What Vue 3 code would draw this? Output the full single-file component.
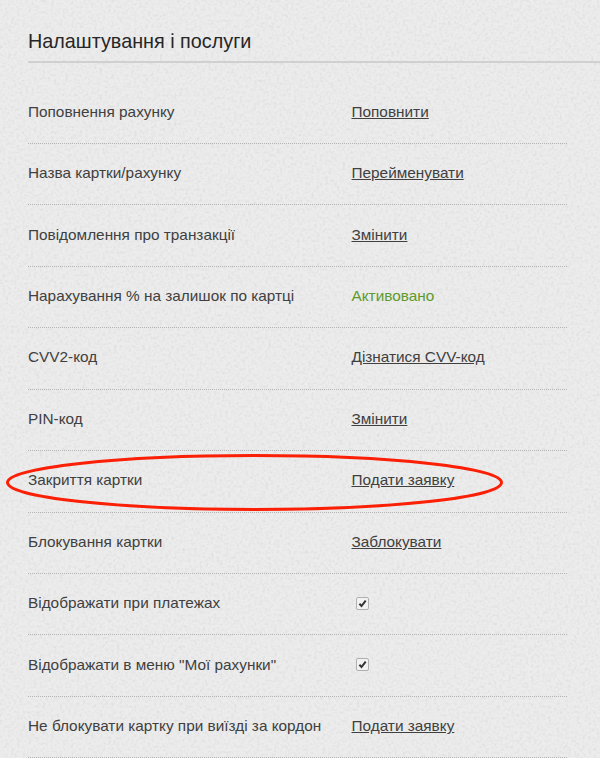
<script setup>
const rows = [
  { label: 'Поповнення рахунку', link: 'Поповнити' },
  { label: 'Назва картки/рахунку', link: 'Перейменувати' },
  { label: 'Повідомлення про транзакції', link: 'Змінити' },
  { label: 'Нарахування % на залишок по картці', status: 'Активовано' },
  { label: 'CVV2-код', link: 'Дізнатися CVV-код' },
  { label: 'PIN-код', link: 'Змінити' },
  { label: 'Закриття картки', link: 'Подати заявку' },
  { label: 'Блокування картки', link: 'Заблокувати' },
  { label: 'Відображати при платежах', check: true },
  { label: 'Відображати в меню "Мої рахунки"', check: true },
  { label: 'Не блокувати картку при виїзді за кордон', link: 'Подати заявку' }
]
</script>

<template>
  <div class="page">
    <svg class="paper" width="600" height="758" aria-hidden="true">
      <filter id="grain" x="0" y="0" width="100%" height="100%">
        <feTurbulence type="fractalNoise" baseFrequency="0.35" numOctaves="3" seed="4" />
        <feColorMatrix type="matrix" values="0 0 0 0 0.5  0 0 0 0 0.5  0 0 0 0 0.5  0.4 0.4 0 0 -0.36" />
      </filter>
      <rect width="600" height="758" fill="#ececec" />
      <rect width="600" height="758" filter="url(#grain)" />
    </svg>

    <h2 class="title">Налаштування і послуги</h2>

    <ul class="list">
      <li v-for="row in rows" :key="row.label" class="row">
        <span class="label">{{ row.label }}</span>
        <a v-if="row.link" class="link" href="#">{{ row.link }}</a>
        <span v-else-if="row.status" class="status">{{ row.status }}</span>
        <span v-else class="check">
          <svg width="9" height="9" viewBox="0 0 9 9">
            <path d="M1.4 4.8 L3.5 7 L7.7 1.6" fill="none" stroke="#333" stroke-width="2" />
          </svg>
        </span>
      </li>
    </ul>

    <svg class="circle" width="600" height="758" aria-hidden="true">
      <ellipse cx="254.5" cy="482.5" rx="247" ry="27" fill="none" stroke="#fb1f06" stroke-width="3" />
    </svg>
  </div>
</template>

<style scoped>
.page {
  position: relative;
  width: 600px;
  height: 758px;
  overflow: hidden;
  font-family: "Liberation Sans", Arial, sans-serif;
  color: #404040;
}
.paper {
  position: absolute;
  top: 0;
  left: 0;
}
.circle {
  position: absolute;
  top: 0;
  left: 0;
  pointer-events: none;
}
.title {
  position: relative;
  margin: 0 0 19.5px 28px;
  height: 63px;
  box-sizing: border-box;
  padding-top: 29px;
  line-height: 24px;
  font-size: 19.8px;
  font-weight: normal;
  color: #262626;
  border-bottom: 2px solid #d0d0d0;
}
.list {
  position: relative;
  list-style: none;
  margin: 0 0 0 28px;
  padding: 0;
  width: 539px;
}
.row {
  display: flex;
  align-items: center;
  height: 61.45px;
  box-sizing: border-box;
  padding-bottom: 2px;
  font-size: 15.35px;
  border-bottom: 1px dotted #b4b4b4;
}
.label {
  flex: 0 0 323.5px;
}
.link {
  color: #404040;
  text-decoration: underline;
}
.status {
  color: #5e9a2c;
}
.check {
  display: flex;
  align-items: center;
  justify-content: center;
  width: 11px;
  height: 11px;
  margin-left: 4px;
  border: 1px solid #b0b0b0;
  border-radius: 2px;
  background: #f2f2f2;
}
</style>
